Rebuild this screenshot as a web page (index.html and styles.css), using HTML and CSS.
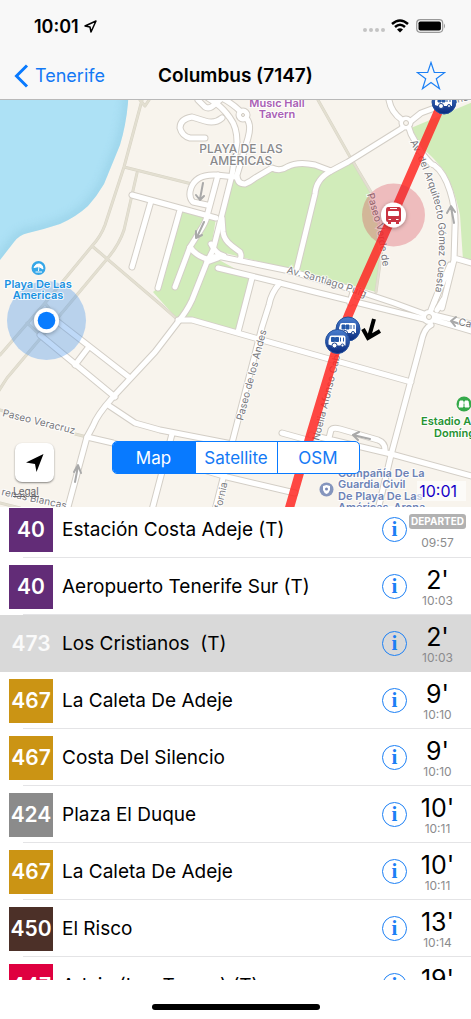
FILE: index.html
```html
<!DOCTYPE html>
<html lang="en">
<head>
<meta charset="utf-8">
<meta name="viewport" content="width=device-width, initial-scale=1">
<title>Columbus (7147)</title>
<link rel="stylesheet" href="styles.css">
</head>
<body>
<div class="app">
  <header class="header">
    <div class="status">
      <span class="clock">10:01</span>
      <svg class="status-arrow" width="13" height="13" viewBox="0 0 13 13"><path d="M1 6 12 1 7 12 6 7Z"/></svg>
      <span class="dots"><i></i><i></i><i></i><i></i></span>
      <svg class="wifi" width="18" height="14" viewBox="0 0 18 14"><path d="M1 5Q9-2 17 5M4 8Q9 3.600 14 8"/><path class="wifi-dot" d="M6 10.400Q9 8 12 10.400L9 13.500Z"/></svg>
      <svg class="battery" width="30" height="14" viewBox="0 0 30 14"><rect class="shell" x=".7" y=".7" width="26" height="12.600" rx="3.500"/><rect x="2.500" y="2.500" width="22.400" height="9" rx="1.800"/><path class="nub" d="M28 4.500Q30 7 28 9.500Z"/></svg>
    </div>
    <nav class="nav">
      <a class="back" href="#"><svg width="15" height="24" viewBox="0 0 15 24"><path d="M13 1.500 2.500 12 13 22.500"/></svg>Tenerife</a>
      <h1>Columbus (7147)</h1>
      <button class="star" aria-label="Favourite"><svg width="30" height="30" viewBox="0 0 30 30"><path d="M15 1.500 18.300 11.500H28.800L20.300 17.700 23.500 27.700 15 21.500 6.500 27.700 9.700 17.700 1.200 11.500H11.700Z"/></svg></button>
    </nav>
  </header>

  <section class="map" aria-label="Map">
    <svg class="canvas" viewBox="0 100 471 407" preserveAspectRatio="xMidYMid slice">
      <defs>
        <path id="sea" d="M-20 80H129L128 103Q126 125 120 145L104 184Q97 196 88 206Q76 217 60 224Q45 229 28 233Q19 235 14 242L0 260-20 280Z"/>
        <clipPath id="sea-clip"><use href="#sea"/></clipPath>
        <filter id="soft" x="-20%" y="-20%" width="140%" height="140%"><feGaussianBlur stdDeviation="5"/></filter>
        <filter id="shade" x="-50%" y="-50%" width="200%" height="200%"><feDropShadow dx="0" dy="1" stdDeviation="2" flood-opacity=".35"/></filter>
        <linearGradient id="blue" x1="0" y1="0" x2="0" y2="1"><stop offset="0" stop-color="#4a7fd0"/><stop offset="1" stop-color="#08297c"/></linearGradient>
        <g id="streets">
          <path d="M132 195 216 218M151 201 132 267M180 210 158 288M218 175 207 216Q206 222 200 231L190 247 175 287"/>
          <path d="M190 247Q196 256 207 259M211 244Q216 254 224 256M207 205 193 202Q188 197 191 188Q196 174 216 175L236 177"/>
          <path d="M198 100 205 107Q210 110 216 103L220 100M208 98Q222 106 230 118Q237 127 237 142L232 175 213 250 207 262 192 300Q187 311 178 322L155 352 113 397Q97 415 93 426L87 437 68 507"/>
          <path d="M222 118Q215 124 205 121L192 117Q180 119 180 128Q182 136 190 138H205M222 98Q233 104 240 111M246 118Q252 124 248 138L237 175Q237 184 245 184Q250 182 255 178L272 168Q280 172 287 167 298 161 315 165L331 171 348 162 401 129 421 113 451 102"/>
          <path d="M331 171Q316 179 315 194L297 268M389 100Q391 112 402 120M409 128 411 134 421 152Q432 166 434 165Q444 172 450 191Q456 210 455 228L454 260 442 308M450 265 434 303M454 258 475 264"/>
          <path d="M222 218 223 232Q224 240 232 246L240 252Q242 256 240 260M207 260Q213 255 222 257L290 271 364 293 394 303 424 314M218 268 280 283 315 292 424 319M434 315 475 325M434 320 475 332M207 262 218 258"/>
          <path d="M252 278 238 332M280 283Q271 293 269 305L262 327 232 443 215 510M178 320H192L255 338 315 355 411 382M431 325Q424 328 421 343L391 455 378 510M437 310 443 300M431 310 438 292M353 292 350 303"/>
          <path d="M311 435 391 454 475 477M329 438 331 430Q333 427 340 429L378 440Q386 443 385 452M282 433 311 441M108 405 135 423 160 430 232 444M172 434 152 510M87 437 113 443 227 477 295 493M58 322 130 378M40 335 115 397M88 348 75 365"/>
        </g>
        <g id="lanes">
          <path d="M142 100 124 167 105 225Q101 236 92 246L45 303 0 355M137 173 124 230Q119 245 107 259L66 308 7 378-2 392M124 167 192 184M92 246 160 304 178 320M27 323 40 335M45 303 58 320M318 100 349 155 371 192 383 242 376 292M75 434 87 437M0 410 15 415M0 503 20 508M140 100 145 106 149 100"/>
        </g>
        <g id="bus">
          <circle r="12" fill="url(#blue)" stroke="#24509c"/>
          <path d="M-8-4Q-8-6-6-6H6Q8-6 8-4V4H-6L-9 3V-1Z" fill="#fff"/>
          <path d="M-6-4H-3V0H-6ZM-2-4H1V0H-2ZM3-4V0M6-4V0" fill="#2458a8" stroke="#2458a8"/>
          <circle cx="-3" cy="4" r="2.500" fill="#fff" stroke="#173f8c"/><circle cx="5" cy="4" r="1.500" fill="#fff" stroke="#173f8c"/>
        </g>
        <path id="t-andes" d="M243 421 269 321"/>
        <path id="t-puig" d="M286 273Q340 287 366 298"/>
        <path id="t-arq" d="M410 142Q424 168 435 205Q443 240 435 294"/>
        <path id="t-verde" d="M367 194Q373 215 377 228L383 268"/>
        <path id="t-noelia" d="M319 441 343 345"/>
        <path id="t-vera" d="M2 416 90 438"/>
        <path id="t-blancas" d="M1 495 75 511"/>
        <path id="t-cal" d="M221 512 229 476"/>
      </defs>
      <rect x="-20" y="80" width="520" height="450" fill="#f8f4ed"/>
      <use href="#sea" fill="#ade1f5"/>
      <g clip-path="url(#sea-clip)"><use href="#sea" class="shore" filter="url(#soft)"/></g>
      <g fill="#d1ecba">
        <path d="M232 178 243 184 272 168 295 163 315 165 331 171 354 160 370 192 383 245 376 292 297 271 213 250Z"/>
        <path d="M180 210 216 218 210 255 252 278 238 332 192 321 178 320 153 292 158 288Z"/>
        <path d="M411 128 475 101V260H463L460 215Q453 183 442 168Q430 154 424 150Z"/>
      </g>
      <use href="#lanes" class="lane-edge"/><use href="#lanes" class="lane"/>
      <path d="M252 280 280 285 268 305 262 327 255 336 240 332Z" fill="#f8f4ed"/>
      <g class="casing"><use href="#streets"/><circle cx="243" cy="115" r="4"/><circle cx="406" cy="123" r="4"/><circle cx="429" cy="317" r="4.500"/></g>
      <g class="road"><use href="#streets"/><circle cx="243" cy="115" r="4"/><circle cx="406" cy="123" r="4"/><circle cx="429" cy="317" r="4.500"/></g>
      <g fill="#f8f4ed" stroke="#cfcac2"><circle cx="243" cy="115" r="1.500"/><circle cx="406" cy="123" r="2.500"/><circle cx="429" cy="317" r="2.500"/></g>
      <g class="oneway">
        <path d="M203 183 200 199M196 195 200 200 204 196M204 222 197 237M196 231 196 238 202 235M454 223 451 207M447 213 451 206 455 212M370 439 353 435M359 432 353 435 358 440M75 482 78 466M74 472 78 465 81 473M463 325 451 321M456 317 451 321 455 326"/>
      </g>
      <g class="street">
        <text><textPath href="#t-andes">Paseo de los Andes</textPath></text>
        <text><textPath href="#t-puig">Av. Santiago Puig</textPath></text>
        <text><textPath href="#t-arq">Av. del Arquitecto Gómez Cuesta</textPath></text>
        <text><textPath href="#t-verde">Paseo Verde de</textPath></text>
        <text><textPath href="#t-noelia">Noelia Afonso Cab</textPath></text>
        <text><textPath href="#t-vera">Paseo Veracruz</textPath></text>
        <text><textPath href="#t-blancas">renas Blancas</textPath></text>
        <text><textPath href="#t-cal">ifornia</textPath></text>
        <text x="458" y="325" transform="rotate(12 458 325)">Ca.</text>
        <text x="452" y="104" transform="rotate(-12 452 104)">años</text>
      </g>
      <g class="district"><text x="241" y="153">PLAYA DE LAS</text><text x="241" y="165">AMÉRICAS</text></g>
      <g class="place" fill="#a95fb5"><text x="277" y="107">Music Hall</text><text x="277" y="118">Tavern</text></g>
      <path class="route" d="M446 94 393 215 354 302Q343 327 336 350L311 433 288 513"/>
      <circle cx="46.500" cy="320.500" r="39.500" fill="#4a97ec" opacity=".36"/>
      <g class="place" fill="#1a92e2"><text x="38" y="288">Playa De Las</text><text x="38" y="299">Americas</text></g>
      <circle cx="38.500" cy="268" r="7" fill="#36a7e8"/><path d="M34 267.500Q36 263 40 264 43 265 43 269L39 266.500 34 267.500M39 266 38.500 271M35.500 272H42" fill="#fff" stroke="#fff"/>
      <g filter="url(#shade)"><circle cx="46.500" cy="320.500" r="12.500" fill="#fff"/></g><circle cx="46.500" cy="320.500" r="8.800" fill="#087cff"/>
      <circle cx="393.500" cy="215" r="31.500" fill="#d42c42" opacity=".28"/>
      <g filter="url(#shade)"><circle cx="393.500" cy="215" r="12.500" fill="#fff"/></g>
      <path d="M388 207H399Q401 207 401 210V220Q401 222 399 222V224H396V222H391V224H388V222Q386 222 386 220V210Q386 207 388 207Z" fill="#c93442"/>
      <path d="M388.500 211.500H398.500V215.500H388.500ZM390 208.500H397M388.500 219.500H391M396 219.500H398.500" fill="#fff" stroke="#fff"/>
      <use href="#bus" x="444" y="102"/><use href="#bus" x="348" y="329"/><use href="#bus" x="337.500" y="341.500"/>
      <path class="heading" d="M374 319 369 337M363 329 368 338 380 331"/>
      <g class="place start" fill="#269332"><text x="421" y="425">Estadio A</text><text x="434" y="437">Domíng</text></g>
      <circle cx="464" cy="404" r="7.500" fill="#35a94a"/><path d="M460 401H463V407H459ZM465 401H468L469 407H465ZM462 403H466" stroke="#fff" fill="#fff"/>
      <g class="place start" fill="#6c82b5"><text x="338" y="477">Compañía De La</text><text x="338" y="488">Guardia Civil</text><text x="338" y="500">De Playa De Las</text><text x="338" y="511">Américas-Arona</text></g>
      <circle cx="326.500" cy="489.500" r="7" fill="#8595bd"/><path d="M323 486 326.500 485 330 486V490Q329 493 326.500 494 324 493 323 490Z" fill="#fff"/><circle cx="326.500" cy="489" r="1.500" fill="#7788b5"/>
    </svg>
    <button class="locate" aria-label="My location"><svg width="18" height="20" viewBox="0 0 18 20"><path d="M17.500 1 10.500 19 9 11 0 9.500Z"/></svg></button>
    <a class="legal" href="#">Legal</a>
    <div class="segments" role="group" aria-label="Map type">
      <button class="on" aria-pressed="true">Map</button><button>Satellite</button><button>OSM</button>
    </div>
    <span class="stamp">10:01</span>
  </section>

  <ul class="list">
    <li class="row"><span class="line purple">40</span><span class="dest">Estación Costa Adeje (T)</span><button class="info" aria-label="Details">i</button><span class="eta"><b class="gone">DEPARTED</b><small>09:57</small></span></li>
    <li class="row"><span class="line purple">40</span><span class="dest">Aeropuerto Tenerife Sur (T)</span><button class="info" aria-label="Details">i</button><span class="eta"><strong>2'</strong><small>10:03</small></span></li>
    <li class="row selected"><span class="line">473</span><span class="dest">Los Cristianos&nbsp; (T)</span><button class="info" aria-label="Details">i</button><span class="eta"><strong>2'</strong><small>10:03</small></span></li>
    <li class="row"><span class="line gold">467</span><span class="dest">La Caleta De Adeje</span><button class="info" aria-label="Details">i</button><span class="eta"><strong>9'</strong><small>10:10</small></span></li>
    <li class="row"><span class="line gold">467</span><span class="dest">Costa Del Silencio</span><button class="info" aria-label="Details">i</button><span class="eta"><strong>9'</strong><small>10:10</small></span></li>
    <li class="row"><span class="line grey">424</span><span class="dest">Plaza El Duque</span><button class="info" aria-label="Details">i</button><span class="eta"><strong>10'</strong><small>10:11</small></span></li>
    <li class="row"><span class="line gold">467</span><span class="dest">La Caleta De Adeje</span><button class="info" aria-label="Details">i</button><span class="eta"><strong>10'</strong><small>10:11</small></span></li>
    <li class="row"><span class="line brown">450</span><span class="dest">El Risco</span><button class="info" aria-label="Details">i</button><span class="eta"><strong>13'</strong><small>10:14</small></span></li>
    <li class="row"><span class="line red">447</span><span class="dest">Adeje (Las Torres) (T)</span><button class="info" aria-label="Details">i</button><span class="eta"><strong>19'</strong><small>10:20</small></span></li>
  </ul>
  <footer class="home"><span></span></footer>
</div>
</body>
</html>
```
FILE: styles.css
```css
* { box-sizing: border-box; }
body { margin: 0; background: #fff; color: #000; font-family: Inter, "Liberation Sans", sans-serif; }
button { font: inherit; padding: 0; border: 0; background: none; color: inherit; cursor: pointer; }
a { text-decoration: none; }
svg { display: block; }

.app { display: flex; flex-direction: column; height: 100vh; overflow: hidden; }

.header { flex: none; background: #f8f8f8; border-bottom: 1px solid #b9b9b9; }
.status { display: flex; align-items: center; height: 52px; padding: 0 25px 0 34px; }
.clock { font-size: 18px; font-weight: 600; margin-right: 5px; }
.status-arrow path { fill: none; stroke: #000; stroke-width: 1.5; stroke-linejoin: round; }
.dots { display: flex; gap: 2px; margin: 8px 6px 0 auto; }
.dots i { width: 4px; height: 4px; border-radius: 50%; background: #c4c4c4; }
.wifi { margin-right: 7px; }
.wifi path { fill: none; stroke: #000; stroke-width: 2.5; }
.wifi .wifi-dot { fill: #000; stroke: none; }
.battery .shell { fill: none; stroke: #999; stroke-width: 1.2; }
.battery .nub { fill: #999; }
.nav { display: grid; grid-template-columns: 1fr auto 1fr; align-items: center; height: 47px; padding: 0 14px; }
.nav h1 { margin: 0; font-size: 19px; font-weight: 600; }
.back { display: flex; align-items: center; gap: 6px; font-size: 18px; color: #1379f5; }
.back path { fill: none; stroke: #087aff; stroke-width: 3; }
.star { justify-self: end; margin-right: 11px; }
.star path { fill: none; stroke: #1c80f5; stroke-width: 1.2; }

.map { position: relative; flex: none; aspect-ratio: 471 / 407; overflow: hidden; }
.canvas { width: 100%; height: 100%; }
.shore { fill: none; stroke: #7cbcd6; stroke-width: 8; opacity: .4; }
.casing, .road, .lane, .lane-edge, .oneway, .route, .heading { fill: none; stroke-linecap: round; stroke-linejoin: round; }
.casing { stroke: #d3cec6; stroke-width: 7; }
.road { stroke: #fff; stroke-width: 5; }
.lane-edge { stroke: #d8d4c5; stroke-width: 3; }
.lane { stroke: #e3dfd1; stroke-width: 2; }
.oneway { stroke: #a9a9a9; stroke-width: 2; }
.route { stroke: #ff2823; stroke-width: 9; opacity: .85; }
.heading { stroke: #000; stroke-width: 4; stroke-linecap: butt; stroke-linejoin: miter; }
.street { font-size: 10px; fill: #77777b; paint-order: stroke; stroke: #fffc; stroke-width: 2; }
.district { font-size: 12px; font-weight: 500; fill: #89898b; text-anchor: middle; paint-order: stroke; stroke: #fffc; stroke-width: 2; }
.place { font-size: 11px; font-weight: 600; text-anchor: middle; paint-order: stroke; stroke: #fffc; stroke-width: 2; }
.start { text-anchor: start; }

.locate { position: absolute; left: 15px; bottom: 25px; width: 39px; height: 39px; display: grid; place-items: center; background: #fff; border-radius: 7px; box-shadow: 0 1px 2px #0007; }
.legal { position: absolute; left: 13px; bottom: 10px; font-size: 10px; line-height: 12px; color: #66666a; text-decoration: underline; }
.segments { position: absolute; left: 0; right: 0; bottom: 33px; margin: 0 auto; display: grid; grid-template-columns: repeat(3, 1fr); width: 248px; height: 33px; border: 1px solid #087aff; border-radius: 5px; background: #fff; overflow: hidden; font-size: 17px; color: #1379f5; }
.segments button + button { border-left: 1px solid #087aff; }
.segments .on { background: #087aff; color: #fff; }
.stamp { position: absolute; right: 5px; bottom: 6px; padding: 0 9px 0 2px; line-height: 20px; font-size: 16px; color: #1600c8; background: #fff9; }

.list { flex: 1; min-height: 0; margin: 0; padding: 0; list-style: none; overflow: hidden; }
.row { position: relative; display: grid; grid-template-columns: 44px 1fr 27px 57px; align-items: center; height: 57px; padding: 0 5px 0 9px; }
.row:first-child { margin-top: -6px; }
.row:not(.selected)::after { content: ""; position: absolute; left: 23px; right: 0; bottom: 0; height: 1px; background: #e4e4e6; }
.selected { background: #d9d9d9; }
.line { height: 44px; font-size: 21px; font-weight: 600; line-height: 44px; text-align: center; color: #fff; }
.purple { background: #622c77; }
.gold { background: #cb9414; }
.grey { background: #8b8b8b; }
.brown { background: #4c3028; }
.red { background: #df0040; }
.selected .line { color: #fafafa; }
.dest { padding-left: 9px; font-size: 19px; white-space: nowrap; }
.info { width: 25px; height: 25px; border: 1px solid #1c80f5; border-radius: 50%; font: bold 21px/21px "Liberation Serif", serif; color: #1c80f5; }
.eta { display: flex; flex-direction: column; align-items: center; }
.eta strong { font-size: 25px; font-weight: 400; line-height: 28px; }
.eta small { font-size: 12px; line-height: 14px; color: #8b8b8d; }
.gone { width: 57px; margin: 4px 0 7px; border-radius: 3px; background: #b2b2b2; font-size: 10px; font-weight: 700; line-height: 15px; text-align: center; color: #fff; }

.home { flex: none; display: flex; justify-content: center; height: 39px; padding-top: 24px; }
.home span { width: 168px; height: 6px; border-radius: 3px; background: #000; }
```
